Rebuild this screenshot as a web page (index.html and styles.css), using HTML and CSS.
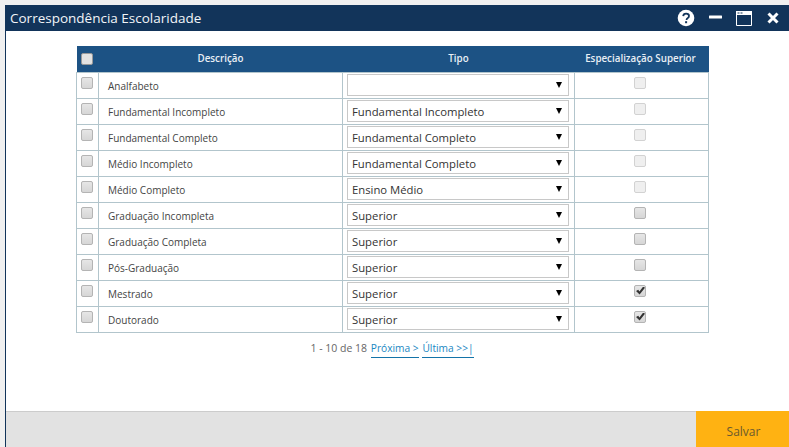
FILE: index.html
```html
<!DOCTYPE html>
<html lang="pt-BR">
<head>
<meta charset="utf-8">
<title>Correspondência Escolaridade</title>
<link rel="stylesheet" href="styles.css">
</head>
<body>
<div class="window">
  <header class="titlebar">
    <h1 class="title">Correspondência Escolaridade</h1>
    <div class="actions">
      <svg class="icon" width="18" height="18" viewBox="0 0 18 18"><circle cx="9" cy="9" r="8.3" fill="#fff"/><path d="M6.2 7.1C6.3 5.4 7.5 4.6 9.1 4.6c1.700 0 2.900 1 2.900 2.400 0 1.200-.7 1.800-1.500 2.300-.7.4-.9.7-.9 1.400v.3" fill="none" stroke="#12345a" stroke-width="1.8"/><rect x="8.100" y="12.200" width="2" height="2" fill="#12345a"/></svg>
      <svg class="icon" width="13" height="18" viewBox="0 0 13 18"><rect x="0" y="6.500" width="13" height="3" rx=".5" fill="#fff"/></svg>
      <svg class="icon" width="16" height="15" viewBox="0 0 16 15"><path d="M.5.5h15v14H.5z" fill="none" stroke="#fff"/><rect x="0" y="0" width="16" height="4" fill="#fff"/><rect x="1.500" y="1.500" width="2" height="1" fill="#12345a"/><rect x="4.500" y="1.500" width="2" height="1" fill="#12345a"/></svg>
      <svg class="icon close" width="12" height="12" viewBox="0 0 12 12"><path d="M1.500 1.500l9 9M10.500 1.500l-9 9" stroke="#fff" stroke-width="3"/></svg>
    </div>
  </header>
  <main class="content">
    <table class="grid">
      <colgroup><col class="c-check"><col class="c-desc"><col class="c-type"><col class="c-spec"></colgroup>
      <thead>
        <tr><th><input type="checkbox" class="cb"></th><th>Descrição</th><th>Tipo</th><th class="th-spec">Especialização Superior</th></tr>
      </thead>
      <tbody>
        <tr><td class="mid"><input type="checkbox" class="cb"></td><td class="name">Analfabeto</td><td><div class="sel"><select><option></option></select></div></td><td class="mid spec"><input type="checkbox" class="cb" disabled></td></tr>
        <tr><td class="mid"><input type="checkbox" class="cb"></td><td class="name">Fundamental Incompleto</td><td><div class="sel"><select><option>Fundamental Incompleto</option></select></div></td><td class="mid spec"><input type="checkbox" class="cb" disabled></td></tr>
        <tr><td class="mid"><input type="checkbox" class="cb"></td><td class="name">Fundamental Completo</td><td><div class="sel"><select><option>Fundamental Completo</option></select></div></td><td class="mid spec"><input type="checkbox" class="cb" disabled></td></tr>
        <tr><td class="mid"><input type="checkbox" class="cb"></td><td class="name">Médio Incompleto</td><td><div class="sel"><select><option>Fundamental Completo</option></select></div></td><td class="mid spec"><input type="checkbox" class="cb" disabled></td></tr>
        <tr><td class="mid"><input type="checkbox" class="cb"></td><td class="name">Médio Completo</td><td><div class="sel"><select><option>Ensino Médio</option></select></div></td><td class="mid spec"><input type="checkbox" class="cb" disabled></td></tr>
        <tr><td class="mid"><input type="checkbox" class="cb"></td><td class="name">Graduação Incompleta</td><td><div class="sel"><select><option>Superior</option></select></div></td><td class="mid spec"><input type="checkbox" class="cb"></td></tr>
        <tr><td class="mid"><input type="checkbox" class="cb"></td><td class="name">Graduação Completa</td><td><div class="sel"><select><option>Superior</option></select></div></td><td class="mid spec"><input type="checkbox" class="cb"></td></tr>
        <tr><td class="mid"><input type="checkbox" class="cb"></td><td class="name">Pós-Graduação</td><td><div class="sel"><select><option>Superior</option></select></div></td><td class="mid spec"><input type="checkbox" class="cb"></td></tr>
        <tr><td class="mid"><input type="checkbox" class="cb"></td><td class="name">Mestrado</td><td><div class="sel"><select><option>Superior</option></select></div></td><td class="mid spec"><input type="checkbox" class="cb" checked></td></tr>
        <tr><td class="mid"><input type="checkbox" class="cb"></td><td class="name">Doutorado</td><td><div class="sel"><select><option>Superior</option></select></div></td><td class="mid spec"><input type="checkbox" class="cb" checked></td></tr>
      </tbody>
    </table>
    <nav class="pager">1 - 10 de 18 <a href="#">Próxima &gt;</a> <a href="#">Última &gt;&gt;|</a></nav>
  </main>
  <footer class="footer"><button class="save" type="button">Salvar</button></footer>
</div>
</body>
</html>
```
FILE: styles.css
```css
* { box-sizing: border-box; }
html, body { height: 100%; }
body {
  margin: 0;
  padding: 5px 0 0 5px;
  background: #f0f0f0;
  font-family: "Open Sans", "Noto Sans", sans-serif;
  overflow: hidden;
}
.window {
  height: 442px;
  display: flex;
  flex-direction: column;
  background: #fff;
  border-left: 1px solid #12345a;
}
.titlebar {
  height: 26px;
  flex: none;
  display: flex;
  align-items: center;
  justify-content: space-between;
  background: #12345a;
  color: #fff;
  padding: 0 10px 0 4px;
}
.title { margin: 0; font-size: 13.500px; font-weight: 400; color: #f2f5f8; }
.actions { display: flex; align-items: center; gap: 14px; }
.icon { display: block; }
.close { margin-left: 1px; }
.content { flex: 1; padding: 15px 0 0 70px; }
.grid {
  width: 632px;
  table-layout: fixed;
  border-collapse: collapse;
  font-size: 10px;
  color: #444;
}
.c-check { width: 22px; }
.c-desc { width: 244px; }
.c-type { width: 232px; }
.c-spec { width: 134px; }
.grid th {
  height: 26px;
  padding: 0;
  background: #1c5284;
  color: #e9eff5;
  font-weight: 600;
  font-size: 9.800px;
  text-align: center;
  vertical-align: middle;
}
.grid th:first-child { text-align: left; padding-left: 4px; }
.grid th.th-spec { padding-right: 2px; }
.grid td {
  height: 26px;
  padding: 0;
  border: 1px solid #b2c5cc;
  vertical-align: middle;
}
.grid td.mid { vertical-align: top; text-align: center; padding: 4px 2px 0 0; }
.grid td.spec { padding-right: 3px; }
.grid td.name { padding-left: 9px; padding-top: 2px; }
.cb {
  appearance: none;
  display: block;
  width: 12px;
  height: 12px;
  margin: 0 auto;
  border: 1px solid #b4b4b4;
  border-radius: 2px;
  background: linear-gradient(#e6e6e6, #d6d6d6);
  position: relative;
}
th .cb { margin: 0; border-color: #999; background: #e2e2e2; }
.cb:disabled { background: #efefef; border-color: #d2d2d2; }
.cb:checked::before {
  content: "";
  position: absolute;
  left: 1px;
  top: 1px;
  width: 9px;
  height: 8px;
  background: #333;
  clip-path: polygon(0 55%, 25% 40%, 38% 62%, 80% 0, 100% 15%, 40% 100%);
}
.sel { position: relative; margin: 0 5px 0 4px; }
.sel select {
  appearance: none;
  display: block;
  width: 100%;
  height: 22px;
  padding: 1px 0 0 4px;
  background: #fff;
  border: 1px solid #c8c8c8;
  border-radius: 0;
  font: 11.300px "Open Sans", "Noto Sans", sans-serif;
  color: #333;
}
.sel::after {
  content: "";
  position: absolute;
  right: 7px;
  top: 8px;
  border-left: 3.500px solid transparent;
  border-right: 3.500px solid transparent;
  border-top: 6px solid #000;
  pointer-events: none;
}
.pager {
  width: 632px;
  margin-top: 8px;
  text-align: center;
  font-size: 10.500px;
  color: #666;
}
.pager a {
  display: inline-block;
  margin-left: 1px;
  font-size: 10.200px;
  color: #1a87c2;
  text-decoration: none;
  border-bottom: 1px solid #1473a8;
  padding-bottom: 2px;
}
.footer {
  height: 36px;
  flex: none;
  display: flex;
  justify-content: flex-end;
  background: #e2e2e2;
  border-top: 1px solid #ccc;
}
.save {
  width: 93px;
  margin-top: -1px;
  padding: 5px 0 0 2px;
  border: 0;
  background: #ffb212;
  color: #6b5a2e;
  font: 12px "Open Sans", "Noto Sans", sans-serif;
}
```
